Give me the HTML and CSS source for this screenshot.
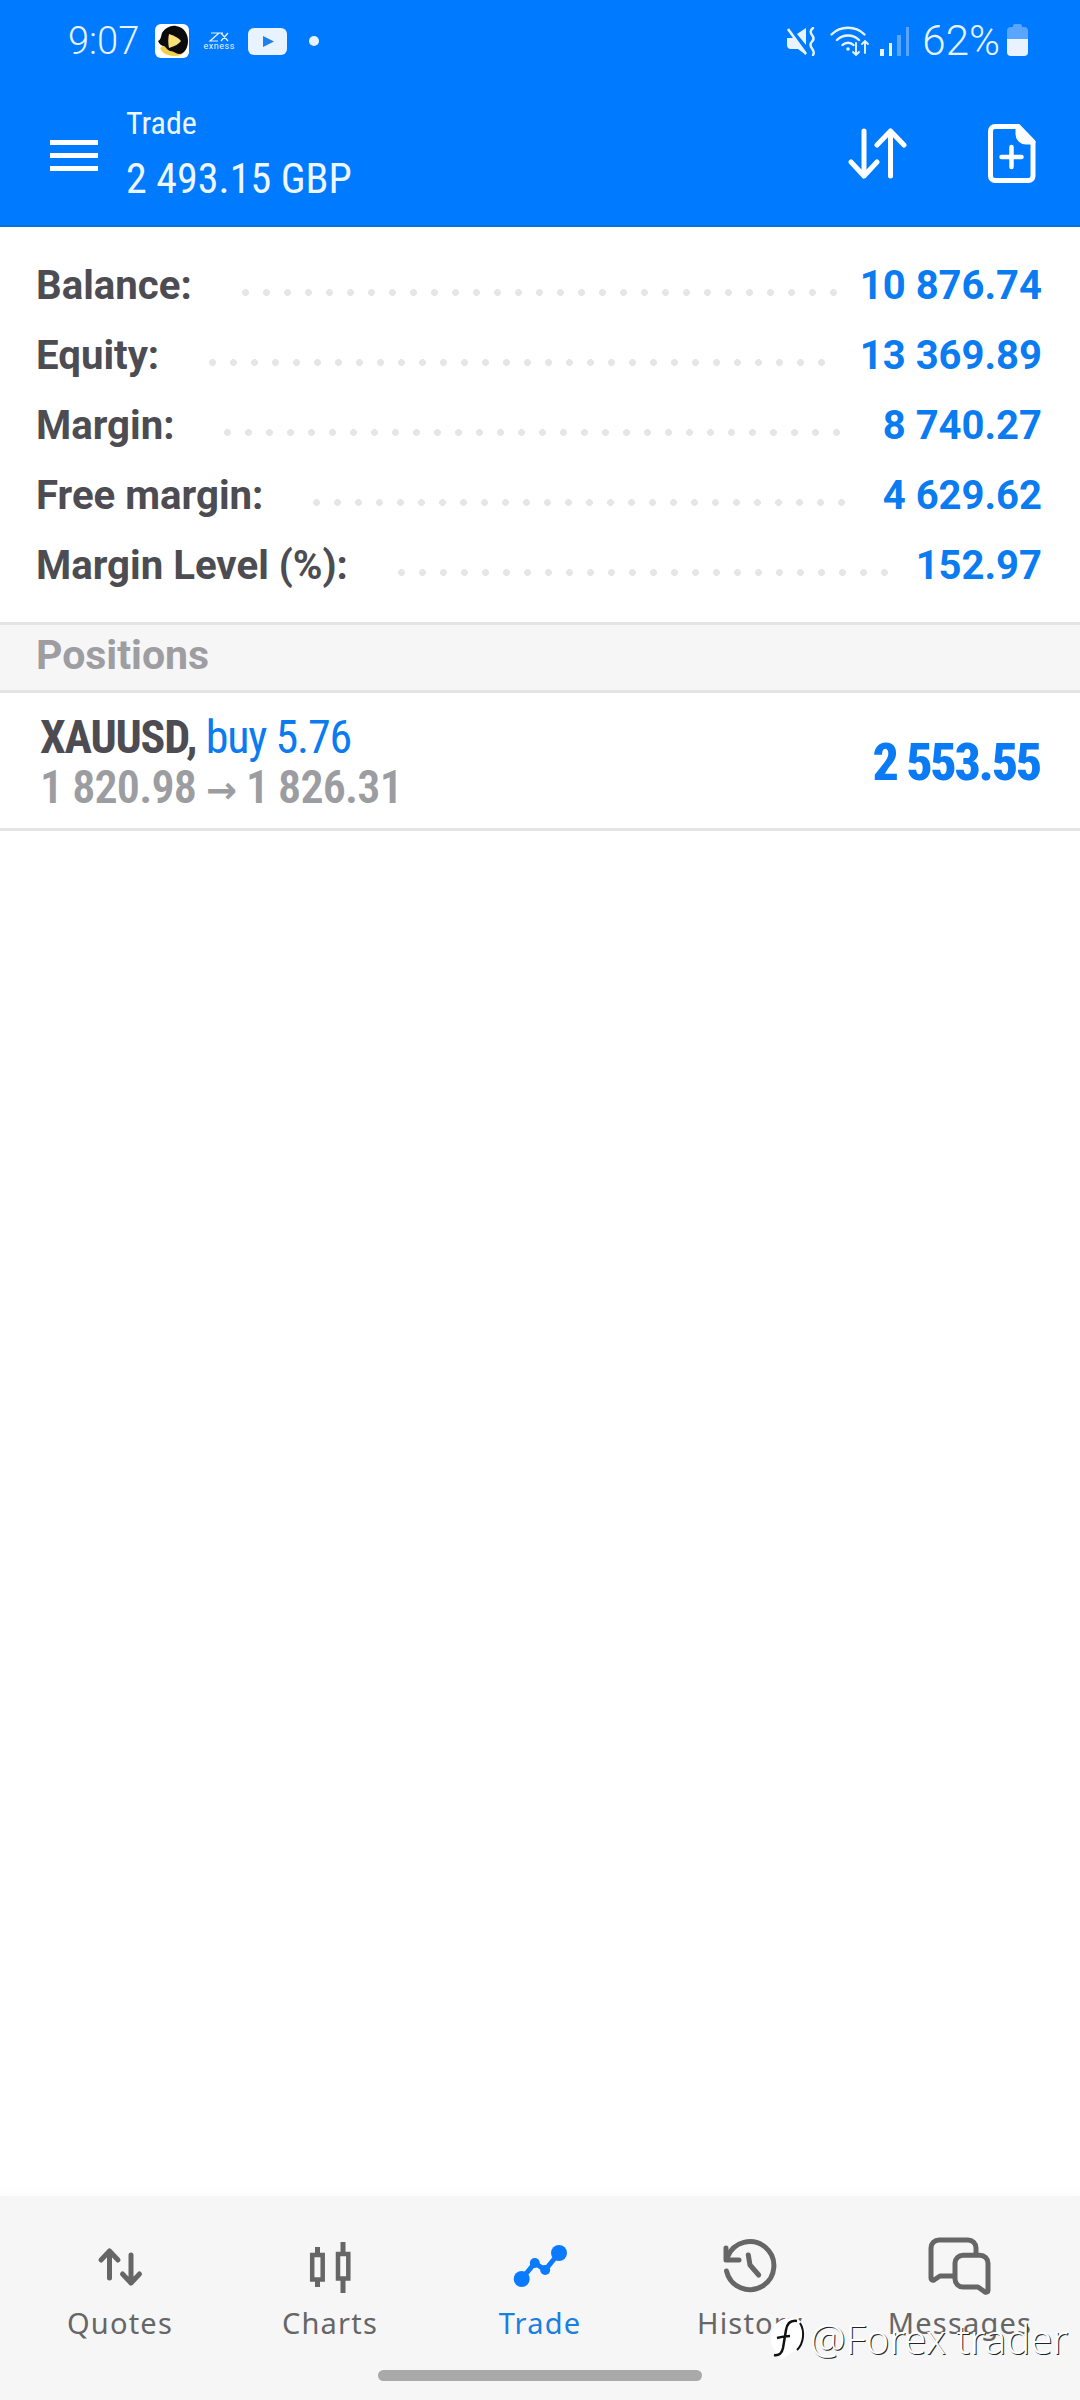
FILE: index.html
```html
<!DOCTYPE html>
<html lang="en">
<head>
    <meta charset="UTF-8">
    <meta name="viewport" content="width=device-width, initial-scale=1.0">
    <title>Trade</title>
    <link rel="stylesheet" href="styles.css">
</head>
<body>
    <header class="top">
        <div class="status">
            <div class="status-left">
                <span class="clock">9:07</span>
                <svg class="snack" width="34" height="34" viewBox="0 0 34 34">
                    <rect width="34" height="34" rx="6" fill="#fff"/>
                    <path d="M5 24c2 6 9 8 15 8 6 0 9-3 10-6L14 18z" fill="#f2cf4a"/>
                    <path d="M3 17c3-1 3-5 4-8 3-5 9-8 14-7 8 1 12 8 12 15 0 6-3 13-9 13-3 0-5-3-9-3-3-1-4-4-6-5-2 0-5-2-6-5z" fill="#0b0b0b"/>
                    <path d="M14 10c6 2 10 4 12 7-2 3-6 5-12 7-1-5-1-9 0-14z" fill="#f7e27a"/>
                </svg>
                <span class="exness">
                    <svg width="22" height="10" viewBox="0 0 22 10" fill="none" stroke="#e8f3ff" stroke-width="1.2">
                        <path d="M3 1h8L2 9h8M13 1l7 8M20 1l-7 8M11 1h4"/>
                    </svg>
                    <span class="exness-name">exness</span>
                </span>
                <svg class="yt" width="39" height="27" viewBox="0 0 39 27">
                    <rect width="39" height="27" rx="6" fill="#e8f3ff"/>
                    <path d="M15 8l11 5.500L15 19z" fill="#1a7fef"/>
                </svg>
                <span class="dot"></span>
            </div>
            <div class="status-right">
                <svg width="30" height="29" viewBox="0 0 30 29" fill="#e8f3ff">
                    <path d="M1 11h6l1-1 12 15v3L12 22H5a4 4 0 0 1-4-4z"/>
                    <path d="M11 7l9-6v17z"/>
                    <path d="M2 2l18 25" stroke="#e8f3ff" stroke-width="2.600"/>
                    <path d="M27 1q-4 3-1 7t0 6.500q-3 3 0 7t1 6.500" fill="none" stroke="#e8f3ff" stroke-width="2.400" stroke-linecap="round"/>
                </svg>
                <svg class="wifi" width="41" height="32" viewBox="0 0 41 32" fill="none" stroke="#e8f3ff" stroke-width="2.400" stroke-linecap="round">
                    <path d="M1.500 9.500c9-9 24-9 33 0M7 15c6-6 16-6 22 0M12.500 20c3-3 8-3 11 0"/>
                    <circle cx="18" cy="24" r="1.800" fill="#e8f3ff" stroke="none"/>
                    <path d="M26 18v12M23 27l3 3 3-3M35 28V16M32 19l3-3 3 3" stroke-width="1.900"/>
                </svg>
                <span class="signal">
                    <i class="bar bar-1"></i><i class="bar bar-2"></i><i class="bar bar-3"></i><i class="bar bar-4"></i>
                </span>
                <span class="clock pct">62%</span>
                <span class="battery"></span>
            </div>
        </div>
        <div class="appbar">
            <div class="burger"><i></i><i></i><i></i></div>
            <div class="appbar-title">
                <div class="screen">Trade</div>
                <div class="profit">2 493.15 GBP</div>
            </div>
            <svg class="sort" width="60" height="51" viewBox="0 0 60 51" fill="none" stroke="#fff" stroke-width="5" stroke-linecap="round" stroke-linejoin="round">
                <path d="M16 3v45M3 34l13 14 13-14"/>
                <path d="M42.500 48V3M29 17L42.500 3 56 17"/>
            </svg>
            <svg class="newdoc" width="48" height="59" viewBox="0 0 48 59" fill="none" stroke="#fff" stroke-width="5" stroke-linejoin="round">
                <path d="M7 2.500h23L45 18v34a4.500 4.500 0 0 1-4.500 4.500H7A4.500 4.500 0 0 1 2.500 52V7A4.500 4.500 0 0 1 7 2.500z"/>
                <path d="M30 2.500V10a8 8 0 0 0 8 8h7z" fill="#fff"/>
                <path d="M23.500 23v20M13.500 33h20" stroke-width="4.500" stroke-linecap="round"/>
            </svg>
        </div>
    </header>

    <main class="content">
        <section class="summary">
            <div class="row"><span class="label">Balance:</span><span class="leader n29"></span><span class="amount">10 876.74</span></div>
            <div class="row"><span class="label">Equity:</span><span class="leader n30"></span><span class="amount">13 369.89</span></div>
            <div class="row"><span class="label">Margin:</span><span class="leader n30"></span><span class="amount">8 740.27</span></div>
            <div class="row"><span class="label">Free margin:</span><span class="leader n26"></span><span class="amount">4 629.62</span></div>
            <div class="row"><span class="label">Margin Level (%):</span><span class="leader n24"></span><span class="amount">152.97</span></div>
        </section>
        <h2 class="section-head">Positions</h2>
        <div class="position">
            <div class="position-info">
                <div class="position-top"><b>XAUUSD,</b> <span class="side">buy 5.76</span></div>
                <div class="position-prices">1 820.98 <span class="price-arrow">→</span> 1 826.31</div>
            </div>
            <div class="position-profit">2 553.55</div>
        </div>
    </main>

    <nav class="tabs">
        <div class="tab-list">
            <div class="tab">
                <svg width="80" height="60" viewBox="0 0 80 60" fill="none" stroke="#666" stroke-width="5" stroke-linecap="round" stroke-linejoin="round">
                    <path d="M29.500 41V14M21 23l8.500-9 8.500 9"/>
                    <path d="M51 18v28M42.500 37l8.500 9 8.500-9"/>
                </svg>
                <span>Quotes</span>
            </div>
            <div class="tab">
                <svg width="80" height="60" viewBox="0 0 80 60" fill="none" stroke="#666" stroke-width="4.500">
                    <rect x="22.200" y="18" width="10.500" height="24.500"/>
                    <path d="M27.500 10v8M27.500 42v8" stroke-width="5"/>
                    <rect x="48" y="17" width="10.300" height="24.500"/>
                    <path d="M53 5v12M53 41v15" stroke-width="5"/>
                </svg>
                <span>Charts</span>
            </div>
            <div class="tab tab-active">
                <svg width="80" height="60" viewBox="0 0 80 60" fill="#0a7bff" stroke="#0a7bff" stroke-width="5" stroke-linejoin="round">
                    <path d="M21.700 42L34.800 26l10.400 7L59 16" fill="none"/>
                    <circle cx="21.700" cy="42" r="8" stroke="none"/>
                    <circle cx="34.800" cy="26" r="5" stroke="none"/>
                    <circle cx="45.200" cy="33" r="5" stroke="none"/>
                    <circle cx="59" cy="16" r="8" stroke="none"/>
                </svg>
                <span>Trade</span>
            </div>
            <div class="tab">
                <svg width="80" height="60" viewBox="0 0 80 60" fill="none" stroke="#666" stroke-width="5" stroke-linecap="round" stroke-linejoin="round">
                    <path d="M17.500 20A24 24 0 1 1 16.500 34"/>
                    <path d="M16 11v12h13"/>
                    <path d="M38.300 18l1.700 10 8.700 10"/>
                </svg>
                <span>History</span>
            </div>
            <div class="tab">
                <svg width="80" height="60" viewBox="0 0 80 60" fill="none" stroke="#666" stroke-width="5" stroke-linejoin="round">
                    <path d="M33 39H20l-6 4a2 2 0 0 1-3-2V11a8 8 0 0 1 8-8h29a8 8 0 0 1 8 8v7"/>
                    <path d="M43 18.200h17a8 8 0 0 1 8 8V53a2 2 0 0 1-3 2l-7-5H43a8 8 0 0 1-8-8V26a8 8 0 0 1 8-7.800z"/>
                </svg>
                <span>Messages</span>
            </div>
        </div>
        <div class="home-pill"></div>
    </nav>

    <div class="watermark">
        <svg width="40" height="44" viewBox="0 0 40 44">
            <path d="M4 18C5 7 14 1 24 1c9 0 14 6 14 15 0 10-6 17-14 20l-10 7-2-6c-6-3-9-10-8-19z" fill="#fff"/>
            <path d="M30 4c-7-1-10 3-11 9l-3 18c-1 5-4 8-9 7M10 21c4-1 8-2 13-2" fill="none" stroke="#111" stroke-width="2.500"/>
            <path d="M33 6c5 8 4 20-3 27" fill="none" stroke="#111" stroke-width="2"/>
        </svg>
        <span>@Forex trader</span>
    </div>
</body>
</html>
```

FILE: styles.css
```css
* {
    box-sizing: border-box;
}
body {
    position: relative;
    display: flex;
    flex-direction: column;
    width: 1080px;
    height: 2400px;
    margin: 0;
    overflow: hidden;
    background-color: #fff;
    font-family: Roboto, "Liberation Sans", sans-serif;
}

/* blue header */
.top {
    height: 227px;
    background-color: #007bff;
    border-bottom: 2px solid #0a6fd6;
}
.status {
    display: flex;
    justify-content: space-between;
    align-items: center;
    height: 82px;
    padding: 0 52px 0 68px;
}
.status-left,
.status-right {
    display: flex;
    align-items: center;
}
.clock {
    color: #e8f3ff;
    font-size: 38px;
    font-weight: 300;
    line-height: 44px;
}
.snack {
    margin-left: 16px;
}
.exness {
    display: flex;
    flex-direction: column;
    align-items: center;
    width: 28px;
    margin-left: 16px;
}
.exness-name {
    color: #e8f3ff;
    font-size: 9px;
    line-height: 9px;
    letter-spacing: 0.5px;
}
.yt {
    margin-left: 15px;
}
.dot {
    width: 10px;
    height: 10px;
    margin-left: 22px;
    border-radius: 50%;
    background-color: #e8f3ff;
}
.wifi {
    margin-left: 14px;
}
.signal {
    display: flex;
    align-items: flex-end;
    gap: 5px;
    height: 29px;
    margin-left: 9px;
}
.bar {
    width: 3.5px;
    background-color: #e8f3ff;
}
.bar-1 { height: 7px; }
.bar-2 { height: 13px; }
.bar-3 { height: 21px; background-color: #5aa5ff; }
.bar-4 { height: 29px; background-color: #5aa5ff; }
.pct {
    margin-left: 13px;
    font-size: 42px;
}
.battery {
    position: relative;
    width: 21px;
    height: 29px;
    margin-left: 7px;
    border-radius: 4px;
    background: linear-gradient(#5aa5ff 0 12px, #e8f3ff 12px);
}
.battery::before {
    content: "";
    position: absolute;
    top: -3px;
    left: 6px;
    width: 9px;
    height: 3px;
    border-radius: 2px 2px 0 0;
    background-color: #5aa5ff;
}
.appbar {
    display: flex;
    align-items: center;
    height: 143px;
    padding: 0 44px 0 50px;
}
.burger {
    display: flex;
    flex-direction: column;
    gap: 8px;
    width: 48px;
    margin-top: 4px;
}
.burger i {
    height: 5px;
    background-color: #fff;
}
.appbar-title {
    flex: 1;
    margin-left: 28px;
    color: #eef6ff;
    font-stretch: 75%;
}
.screen {
    font-size: 32px;
    line-height: 40px;
}
.profit {
    font-size: 42px;
    line-height: 50px;
    margin-top: 11px;
}
.newdoc {
    margin-left: 80px;
}

/* account summary */
.content {
    flex: 1;
}
.summary {
    padding: 23px 38px 22px 36px;
}
.row {
    display: flex;
    align-items: center;
    height: 70px;
}
.label {
    color: #4c4c52;
    font-size: 40.2px;
    font-weight: 700;
}
.leader {
    height: 7px;
    margin: 15px auto 0 50px;
    background: radial-gradient(circle at 3.5px 3.5px, #e6e6e6 3.2px, transparent 3.7px) 0 0 / 21px 7px repeat-x;
}
.n24 { width: 504px; }
.n26 { width: 546px; }
.n29 { width: 609px; }
.n30 { width: 630px; }
.amount {
    color: #0a7bf0;
    font-size: 40px;
    font-weight: 700;
}
.section-head {
    height: 71px;
    margin: 0;
    padding-left: 36px;
    background-color: #f6f6f6;
    border-top: 3px solid #e4e4e4;
    border-bottom: 3px solid #e4e4e4;
    color: #9d9da2;
    font-size: 41px;
    font-weight: 700;
    line-height: 60px;
}
.position {
    display: flex;
    justify-content: space-between;
    align-items: center;
    height: 138px;
    padding: 3px 40px 0;
    border-bottom: 3px solid #e4e4e4;
    font-stretch: 75%;
}
.position-info {
    padding-top: 3px;
}
.position-top {
    color: #4c4c52;
    font-size: 46px;
    letter-spacing: -1.2px;
    line-height: 50px;
}
.side {
    color: #0a7bf0;
}
.position-prices {
    color: #9c9da1;
    font-size: 46px;
    font-weight: 600;
    letter-spacing: -0.8px;
    line-height: 50px;
}
.price-arrow {
    font-family: "DejaVu Sans", sans-serif;
    font-size: 37px;
    font-weight: 700;
    font-stretch: normal;
}
.position-profit {
    color: #0a7bf5;
    font-size: 52px;
    font-weight: 800;
    letter-spacing: -2.3px;
}

/* bottom tabs */
.tabs {
    height: 204px;
    padding-top: 41px;
    background-color: #f6f6f6;
    box-shadow: 0 -4px 10px rgba(0, 0, 0, 0.02);
}
.tab-list {
    display: grid;
    grid-template-columns: repeat(5, 210px);
    padding: 0 15px;
}
.tab {
    display: flex;
    flex-direction: column;
    align-items: center;
    color: #666;
    font-family: "Noto Sans", sans-serif;
    font-size: 29px;
    letter-spacing: 1.2px;
    line-height: 40px;
}
.tab svg {
    display: block;
    margin-bottom: 6px;
}
.tab-active {
    color: #1a7fe0;
}
.home-pill {
    width: 324px;
    height: 11px;
    margin: 27px auto 0;
    border-radius: 6px;
    background-color: #a9a9a9;
}

/* overlay stamped on the screenshot */
.watermark {
    position: absolute;
    left: 767px;
    top: 2317px;
    display: flex;
    align-items: center;
    gap: 3px;
    color: #fff;
    font-family: "Noto Sans", sans-serif;
    font-size: 40px;
    font-weight: 300;
    line-height: 44px;
    text-shadow: 1px 1px 0 #222;
    white-space: nowrap;
}
```
